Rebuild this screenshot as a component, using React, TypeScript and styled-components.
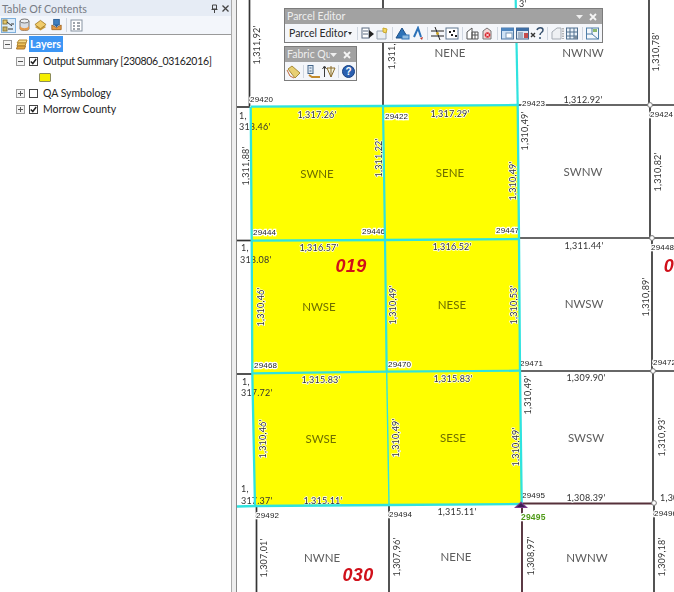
import React from "react";
import styled, { createGlobalStyle } from "styled-components";

const Global = createGlobalStyle`
  html, body { margin: 0; padding: 0; background: #fff; }
  #root { width: 674px; height: 592px; overflow: hidden; }
`;

const Shell = styled.div`
  display: flex; width: 674px; height: 592px; overflow: hidden;
  font-family: Lato, "Liberation Sans", sans-serif;
`;
const TocPanel = styled.aside`
  width: 231px; flex: none; display: flex; flex-direction: column;
  border-right: 1px solid #a9a9a9; background: #fff;
`;
const Splitter = styled.div`
  width: 4px; flex: none; background: #eeeeee; border-right: 1px solid #8a8a8a;
`;
const TocTitle = styled.header`
  height: 16px; display: flex; align-items: center; justify-content: space-between;
  background: #e6ecf5; color: #767b84; font-size: 10.7px; padding: 0 2px 0 2px;
`;
const TitleTools = styled.div`
  display: flex; align-items: center; gap: 4px; color: #444;
`;
const TocBar = styled.div`
  height: 18px; display: flex; align-items: center; gap: 1px; padding-left: 1px;
  background: #f3f6fb; border-bottom: 1px solid #9a9a9a;
`;
const TocButton = styled.span<{ $on?: boolean }>`
  width: 15px; height: 15px; display: flex; align-items: center; justify-content: center;
  box-sizing: border-box; border: 1px solid ${p => (p.$on ? "#7fb0dc" : "transparent")};
  background: ${p => (p.$on ? "#dcecfa" : "transparent")};
`;
const BarSep = styled.span<{ $h?: number }>`
  width: 1px; height: ${p => p.$h ?? 14}px; background: #cfd6e0; margin: 0 ${p => (p.$h ? 2 : 1)}px; flex: none;
`;
const Tree = styled.div`
  flex: 1; padding-top: 1px; background: #fff; font-size: 10.5px; color: #222;
`;
const Row = styled.div<{ $indent: number; $gap?: number }>`
  height: 16px; display: flex; align-items: center; padding-left: ${p => p.$indent}px;
  white-space: nowrap; margin-bottom: ${p => p.$gap ?? 0}px;
`;
const LayerName = styled.span<{ $tight?: boolean }>`
  letter-spacing: ${p => (p.$tight ? "-0.3px" : "0")};
`;
const Expander = styled.span`
  width: 9px; height: 9px; box-sizing: border-box; border: 1px solid #9a9a9a; background: #f5f5f5;
  position: relative; flex: none; margin-right: 4px;
  &::before { content: ""; position: absolute; left: 1px; right: 1px; top: 3px; height: 1px; background: #555; }
`;
const ExpanderPlus = styled(Expander)`
  &::after { content: ""; position: absolute; top: 1px; bottom: 1px; left: 3px; width: 1px; background: #555; }
`;
const Check = styled.span`
  width: 9px; height: 9px; box-sizing: border-box; border: 1px solid #444; background: #fff; flex: none;
  margin-right: 5px; display: flex; align-items: center; justify-content: center;
`;
const RootLabel = styled.span`
  background: #3c96f5; color: #fff; font-weight: 700; height: 16px; line-height: 16px;
  padding: 0 1px; margin-left: 1px; width: 32px; font-size: 10.8px;
`;
const Swatch = styled.span`
  width: 10px; height: 7px; background: #f5ee00; border: 1px solid #8c8c5a; border-radius: 1px;
`;
const MapCanvas = styled.main`
  flex: 1; position: relative; background: #fff; overflow: hidden;
`;
const MapSvg = styled.svg`
  display: block; width: 437px; height: 592px; filter: blur(0.4px);
`;
const Section = styled.text<{ $on?: boolean }>`
  font: 11.5px Lato, sans-serif; fill: ${p => (p.$on ? "#6e6e00" : "#5d5d5d")};
  text-anchor: middle; dominant-baseline: central;
`;
const Dist = styled.text<{ $start?: boolean }>`
  font: 9px Lato, sans-serif; fill: #333; letter-spacing: 0.2px;
  text-anchor: ${p => (p.$start ? "start" : "middle")}; dominant-baseline: central;
  paint-order: stroke; stroke: #fff; stroke-width: ${p => (p.$start ? 0 : 1.4)}px; stroke-linejoin: round;
`;
const Pid = styled.text<{ $green?: boolean }>`
  font: ${p => (p.$green ? "700 8.5px" : "8px")} "Liberation Sans", sans-serif;
  fill: ${p => (p.$green ? "#4f9a18" : "#222")}; dominant-baseline: central; letter-spacing: 0.2px;
  paint-order: stroke; stroke: #fff; stroke-width: 2.6px; stroke-linejoin: miter;
`;
const Sec = styled.text`
  font: italic 700 18px "Liberation Sans", sans-serif; fill: #d0101a;
  text-anchor: middle; dominant-baseline: central; letter-spacing: 0.4px;
`;
const Floating = styled.section<{ $x: number; $y: number; $w: number }>`
  position: absolute; left: ${p => p.$x}px; top: ${p => p.$y}px; width: ${p => p.$w}px;
  box-sizing: border-box; border: 1px solid #7c7c7c; background: #f4f6fa; overflow: hidden;
`;
const FloatTitle = styled.header`
  height: 15px; background: #a2a2a2; color: #eeeeee; font-size: 10.5px; line-height: 15px;
  display: flex; justify-content: space-between; align-items: center; padding: 0 5px 0 2px; white-space: nowrap;
`;
const TitleText = styled.span`
  min-width: 0; overflow: hidden; flex: 1;
`;
const FloatTools = styled.span`
  display: flex; gap: 6px; align-items: center; flex: none;
`;
const FloatBar = styled.div<{ $pad: number }>`
  height: 18px; display: flex; align-items: center; padding-left: ${p => p.$pad}px; white-space: nowrap;
`;
const MenuLabel = styled.span`
  font-size: 10.5px; color: #2b2b2b; width: 66px; flex: none; display: flex; align-items: center; gap: 1px;
`;
const Caret = styled.span`
  width: 0; height: 0; border: 2px solid transparent; border-top: 3px solid #333; margin-top: 3px;
`;
const ToolIcon = styled.svg`
  width: 15px; height: 15px; flex: none; display: block;
`;

const I = ({ children }: { children: React.ReactNode }) => (
  <ToolIcon viewBox="0 0 15 15">{children}</ToolIcon>
);

const DocArrow = () => <I><rect x="2" y="2" width="7" height="10" fill="#fff" stroke="#5b6b80" /><path d="M3 5h5M3 8h5" stroke="#5b6b80" /><path d="M9 4l5 4-5 4z" fill="#222" /></I>;
const Folder = () => <I><path d="M2 5h9v8H2z" fill="#e8edf3" stroke="#9aa6b4" /><path d="M8 2l4 1-1 4-3-1z" fill="#f6d860" stroke="#c8a830" /></I>;
const BlueTri = () => <I><path d="M1 12L7 2l6 10z" fill="#2c72b8" stroke="#1d4f85" /><rect x="7" y="9" width="7" height="4" fill="#8fbbe0" stroke="#2c72b8" /></I>;
const AText = () => <I><path d="M4 11L8 2l3 9" fill="none" stroke="#2c72b8" strokeWidth="2" /><path d="M10 12l2 2 1-3z" fill="#c0392b" /></I>;
const Cross = () => <I><path d="M1 5h13M1 10h13" stroke="#222" /><path d="M5 1l5 13" stroke="#222" /><circle cx="7.500" cy="7.500" r="1.400" fill="#c8a020" /></I>;
const Dots = () => <I><rect x="1" y="2" width="12" height="11" fill="#fff" stroke="#5f7690" /><path d="M4 5h2v2H4zM8 4h2v2H8zM6 8h2v2H6zM10 9h2v2h-2z" fill="#222" /></I>;
const Gable = () => <I><path d="M2 13V6l5-4v11zM7 6h6v7H7z" fill="#fff" stroke="#555" /><path d="M7 9h6M10 6v7" stroke="#555" /></I>;
const RedDoc = () => <I><path d="M3 13V5l4-3 4 3v8z" fill="#f2d6d6" stroke="#777" /><circle cx="7.500" cy="9" r="2.800" fill="#d9242c" /><path d="M6 7.500l3 3M9 7.500l-3 3" stroke="#fff" /></I>;
const Window = () => <I><rect x="1.500" y="2" width="12" height="11" fill="#cfe2f5" stroke="#4e79a7" /><rect x="1.500" y="2" width="12" height="3" fill="#4e86c0" /><rect x="6" y="7" width="6" height="5" fill="#fff" stroke="#7a98b8" /></I>;
const WindowDark = () => <I><rect x="1.500" y="2" width="12" height="11" fill="#dbe6f2" stroke="#44648a" /><rect x="1.500" y="2" width="12" height="3" fill="#3f6fa6" /><path d="M3 7h5M3 9h5M3 11h5" stroke="#6a7f98" /><rect x="9" y="7" width="4" height="5" fill="#c64b4b" /></I>;
const XQ = () => <I><path d="M1 7l4 4M5 7l-4 4" stroke="#333" strokeWidth="1.400" /><path d="M7 4c1-3 6-3 6 0 0 3-3 2-3 5" fill="none" stroke="#36506e" strokeWidth="1.500" /><circle cx="10" cy="12" r="1" fill="#36506e" /></I>;
const Ghost = () => <I><path d="M2 13V6l5-4h4v11z" fill="#eef0f3" stroke="#a7adb5" /><path d="M13 2v11" stroke="#777" strokeDasharray="1.500 1" /></I>;
const Grid = () => <I><rect x="1.500" y="2" width="11" height="11" fill="#eaf1f8" stroke="#51708f" /><path d="M5 2v11M9 2v11M1.500 6h11M1.500 10h11" stroke="#51708f" /><path d="M9 10h3v3H9z" fill="#7a8b9c" /></I>;
const Grid2 = () => <I><rect x="1.500" y="2" width="12" height="11" fill="#f3f7fb" stroke="#4e7ea8" /><path d="M7 2v6H2M7 8l6 5" stroke="#4e7ea8" fill="none" /><rect x="8" y="3" width="4" height="3" fill="#8cb86a" /></I>;
const Tag = () => <I><path d="M2 5l4-3 8 7-5 5z" fill="#e8cf72" stroke="#a78a3a" /><path d="M1 6l3 6 4 2" fill="none" stroke="#c06a3a" /></I>;
const Ruler = () => <I><rect x="2" y="1.500" width="5" height="8" fill="#dfe9f4" stroke="#44668a" /><path d="M3.500 4h2M3.500 7h2" stroke="#44668a" /><path d="M3 11l3 2h8" fill="none" stroke="#c28a2c" strokeWidth="2" /></I>;
const Arrows = () => <I><path d="M3.500 13V3M1.500 5l2-3 2 3" fill="none" stroke="#3a3a3a" /><path d="M6 4h8l-4 9z" fill="#f6f6e0" stroke="#8a6b2a" /><path d="M10 2v11" stroke="#8a6b2a" /></I>;
const Help = () => <I><circle cx="7.500" cy="7.500" r="6" fill="#2a5fb0" stroke="#173f80" /><text x="7.500" y="11" textAnchor="middle" fontSize="10" fontWeight="700" fontFamily="Liberation Sans" fill="#fff">?</text></I>;
const TocOrder = () => <svg width="13" height="13" viewBox="0 0 13 13"><rect x="1" y="1" width="4" height="4" fill="#e5c76b" stroke="#8a7a3a" /><rect x="1" y="8" width="4" height="4" fill="#c9b36a" stroke="#8a7a3a" /><path d="M5 3l5 4M6 10h5M9 5h3" stroke="#333" fill="none" /></svg>;
const TocDb = () => <svg width="13" height="14" viewBox="0 0 13 14"><path d="M2 3v8c0 2 9 2 9 0V3z" fill="#d9dde3" stroke="#777" /><ellipse cx="6.500" cy="3" rx="4.500" ry="2" fill="#eef0f3" stroke="#777" /><path d="M2 8c2 3 7 3 9 0v3c0 2-9 2-9 0z" fill="#e49a4a" /></svg>;
const TocDiamond = () => <svg width="14" height="13" viewBox="0 0 14 13"><path d="M1 8l6 4 6-4-6-3z" fill="#c79a3a" /><path d="M1 5.500L7 1l6 4.500L7 10z" fill="#f0cc6a" stroke="#a9832e" /></svg>;
const TocSource = () => <svg width="14" height="14" viewBox="0 0 14 14"><path d="M2 7v5h10V7L7 10z" fill="#e59a45" stroke="#a76a25" /><rect x="4" y="1" width="6" height="6" fill="#3f7fc0" stroke="#2b5f95" /><path d="M5 7h4l-2 3z" fill="#2b5f95" /></svg>;
const TocOptions = () => <svg width="13" height="13" viewBox="0 0 13 13"><rect x="1" y="1" width="11" height="11" fill="#fff" stroke="#8793a2" /><path d="M3 4h2M7 4h3M3 7h2M7 7h3M3 10h2M7 10h3" stroke="#3f4a58" /></svg>;
const LayersIcon = () => <svg width="12" height="11" viewBox="0 0 12 11"><path d="M1 4l2-3h8l-1 3z" fill="#f3d98a" stroke="#b58a35" /><path d="M1 7l1-3h8l-1 3z" fill="#eec25a" stroke="#b58a35" /><path d="M.5 10l1-3h8l-1 3z" fill="#e6a83d" stroke="#a8762a" /></svg>;
const Tick = () => <svg width="7" height="7" viewBox="0 0 7 7"><path d="M.8 3.500l2 2L6.200 1" fill="none" stroke="#222" strokeWidth="1.500" /></svg>;
const Pin = () => <svg width="7" height="9" viewBox="0 0 7 9"><path d="M1.500 1h4v4h-4zM.5 5.500h6M3.500 5.500V9" fill="none" stroke="#444" /></svg>;
const CloseX = () => <svg width="7" height="7" viewBox="0 0 7 7"><path d="M.5.5l6 6M6.500.5l-6 6" stroke="#444" strokeWidth="1.300" /></svg>;
const WhiteX = () => <svg width="8" height="8" viewBox="0 0 8 8"><path d="M1 1l6 6M7 1L1 7" stroke="#f5f5f5" strokeWidth="1.800" /></svg>;
const DropDown = () => <svg width="7" height="4" viewBox="0 0 7 4"><path d="M0 0h7L3.500 4z" fill="#efefef" /></svg>;

const sections: [string, number, number, boolean][] = [
  ["NENE", 450, 52, false], ["NWNW", 583, 52, false],
  ["SWNE", 317, 173, true], ["SENE", 450, 172, true], ["SWNW", 583, 171, false],
  ["NWSE", 319, 306, true], ["NESE", 452, 304, true], ["NWSW", 584, 303, false],
  ["SWSE", 321, 438, true], ["SESE", 453, 437, true], ["SWSW", 586, 437, false],
  ["NWNE", 322, 557, false], ["NENE", 456, 556, false], ["NWNW", 587, 557, false],
];
const horiz: [string, number, number][] = [
  ["1,317.26'", 317, 114], ["1,317.29'", 450, 113], ["1,312.92'", 583, 99],
  ["1,316.57'", 319, 247], ["1,316.52'", 452, 246], ["1,311.44'", 584, 245],
  ["1,315.83'", 321, 379], ["1,315.83'", 453, 378], ["1,309.90'", 586, 377],
  ["1,315.11'", 323, 500], ["1,315.11'", 457, 511], ["1,308.39'", 586, 497],
];
const vert: [string, number, number][] = [
  ["1,311,92'", 256, 45], ["1,311,22'", 391, 50], ["1,310,78'", 655, 52],
  ["1,311,88'", 245, 166], ["1,311,22'", 378, 158], ["1,310,49'", 524, 131], ["1,310,49'", 512, 181], ["1,310,82'", 657, 172],
  ["1,310,46'", 260, 307], ["1,310,49'", 392, 305], ["1,310,53'", 513, 305], ["1,310,89'", 645, 297],
  ["1,310,49'", 527, 395], ["1,310,46'", 262, 439], ["1,310,49'", 395, 438], ["1,310,49'", 515, 447], ["1,310,93'", 661, 437],
  ["1,307,01'", 263, 558], ["1,307,96'", 396, 557], ["1,308,97'", 530, 556], ["1,309,18'", 661, 557],
];
const plain: [string, number, number][] = [
  ["1,", 239, 115], ["318.46'", 239, 126], ["1,", 241, 247], ["318.08'", 240, 259],
  ["1,", 242, 381], ["317.72'", 241, 392], ["1,", 241, 488], ["317.37'", 241, 500],
  ["1,30", 660, 497], ["3'", 519, 3],
];
const pids: [string, number, number][] = [
  ["29420", 250, 99], ["29422", 385, 116], ["29423", 522, 103], ["29424", 650, 114],
  ["29444", 253, 232], ["29446", 362, 231], ["29447", 496, 230], ["29448", 651, 247],
  ["29468", 254, 365], ["29470", 388, 364], ["29471", 520, 363], ["29472", 653, 362],
  ["29495", 522, 495], ["29492", 256, 515], ["29494", 389, 514], ["29496", 654, 513],
];
const dark = [
  "M249.500 0V106", "M383 0V105", "M649 0V105", "M237 107H250", "M517 105H674", "M650 105V238",
  "M237 240.500H252", "M519 238H674", "M652 238V370.500", "M237 374H252", "M520 371H674", "M653 371V503",
  "M256.500 506V592", "M389 505V592", "M654 503V592",
];
const cyan: [string, number][] = [
  ["M515.700 0L517.700 105", 2.2], ["M250.700 106.700L383 106L517.700 105L519 239L520 370.700L521.700 504", 2.3],
  ["M250.700 106.700L251.700 240.700L252.300 373.300L255 506", 2.3], ["M383 106L385 240L386.700 371.700", 2.2],
  ["M386.700 371.700L389 505", 1.4],
  ["M251.700 240.700L385 240L519 239", 2.3], ["M252.300 373.300L386.700 371.700L520 370.700", 2.2], ["M237 506.500L255 506L389 505L521.700 504", 2.3],
];
const nodes: [number, number][] = [[650, 105], [652, 238], [653, 371], [654, 503]];

const ParcelMap = () => (
  <MapSvg viewBox="237 0 437 592">
    <path d="M250.700 106.700L383 106L517.700 105L519 239L520 370.700L521.700 504L389 505L255 506L252.300 373.300L251.700 240.700Z" fill="#ffff00" />
    {dark.map(d => <path key={d} d={d} stroke="#343434" strokeWidth="1.700" fill="none" />)}
    <path d="M522 503.500H652" stroke="#56303a" strokeWidth="1.800" />
    <path d="M522 506V592" stroke="#4a2430" strokeWidth="1.800" />
    {nodes.map(([x, y]) => <circle key={x} cx={x} cy={y} r="2.400" fill="#fff" stroke="#777" />)}
    {sections.map(([t, x, y, on]) => <Section key={t + x + y} x={x} y={y} $on={on}>{t}</Section>)}
    {horiz.map(([t, x, y]) => <Dist key={t + x + y} x={x} y={y}>{t}</Dist>)}
    {vert.map(([t, x, y]) => <Dist key={t + x + y} x={x} y={y} transform={`rotate(-90 ${x} ${y})`}>{t}</Dist>)}
    {plain.map(([t, x, y]) => <Dist key={t + x + y} $start x={x} y={y}>{t}</Dist>)}
    {pids.map(([t, x, y]) => <Pid key={t + x} x={x} y={y}>{t}</Pid>)}
    <Pid $green x={521} y={517}>29495</Pid>
    <Sec x={351} y={266}>019</Sec>
    <Sec x={358} y={575}>030</Sec>
    <Sec x={669} y={266}>0</Sec>
    {cyan.map(([d, w]) => <path key={d} d={d} stroke="#2fe3df" strokeWidth={w} fill="none" />)}
    <path d="M514 508L521 501.500L528 508Z" fill="#7b3a8e" />
    <path d="M517 507L521 503L525 507Z" fill="#3a1f55" />
  </MapSvg>
);

export default function App() {
  return (
    <Shell>
      <Global />
      <TocPanel>
        <TocTitle>Table Of Contents<TitleTools><Pin /><CloseX /></TitleTools></TocTitle>
        <TocBar>
          <TocButton $on><TocOrder /></TocButton>
          <TocButton><TocDb /></TocButton>
          <TocButton><TocDiamond /></TocButton>
          <TocButton><TocSource /></TocButton>
          <BarSep />
          <TocButton><TocOptions /></TocButton>
        </TocBar>
        <Tree>
          <Row $indent={3} $gap={1}><Expander /><LayersIcon /><RootLabel>Layers</RootLabel></Row>
          <Row $indent={16}><Expander /><Check><Tick /></Check><LayerName $tight>Output Summary [230806_03162016]</LayerName></Row>
          <Row $indent={39}><Swatch /></Row>
          <Row $indent={16}><ExpanderPlus /><Check /><LayerName>QA Symbology</LayerName></Row>
          <Row $indent={16}><ExpanderPlus /><Check><Tick /></Check><LayerName>Morrow County</LayerName></Row>
        </Tree>
      </TocPanel>
      <Splitter />
      <MapCanvas>
        <ParcelMap />
        <Floating $x={47} $y={8} $w={319}>
          <FloatTitle><TitleText>Parcel Editor</TitleText><FloatTools><DropDown /><WhiteX /></FloatTools></FloatTitle>
          <FloatBar $pad={4}>
            <MenuLabel>Parcel Editor<Caret /></MenuLabel>
            <BarSep $h={13} /><DocArrow /><Folder />
            <BarSep $h={13} /><BlueTri /><AText />
            <BarSep $h={13} /><Cross /><Dots />
            <BarSep $h={13} /><Gable /><RedDoc />
            <BarSep $h={13} /><Window /><WindowDark /><XQ />
            <BarSep $h={13} /><Ghost /><Grid />
            <BarSep $h={13} /><Grid2 />
          </FloatBar>
        </Floating>
        <Floating $x={47} $y={46} $w={73}>
          <FloatTitle><TitleText>Fabric Qu</TitleText><FloatTools><DropDown /><WhiteX /></FloatTools></FloatTitle>
          <FloatBar $pad={1}>
            <Tag /><BarSep $h={13} /><Ruler /><Arrows /><BarSep $h={13} /><Help />
          </FloatBar>
        </Floating>
      </MapCanvas>
    </Shell>
  );
}
